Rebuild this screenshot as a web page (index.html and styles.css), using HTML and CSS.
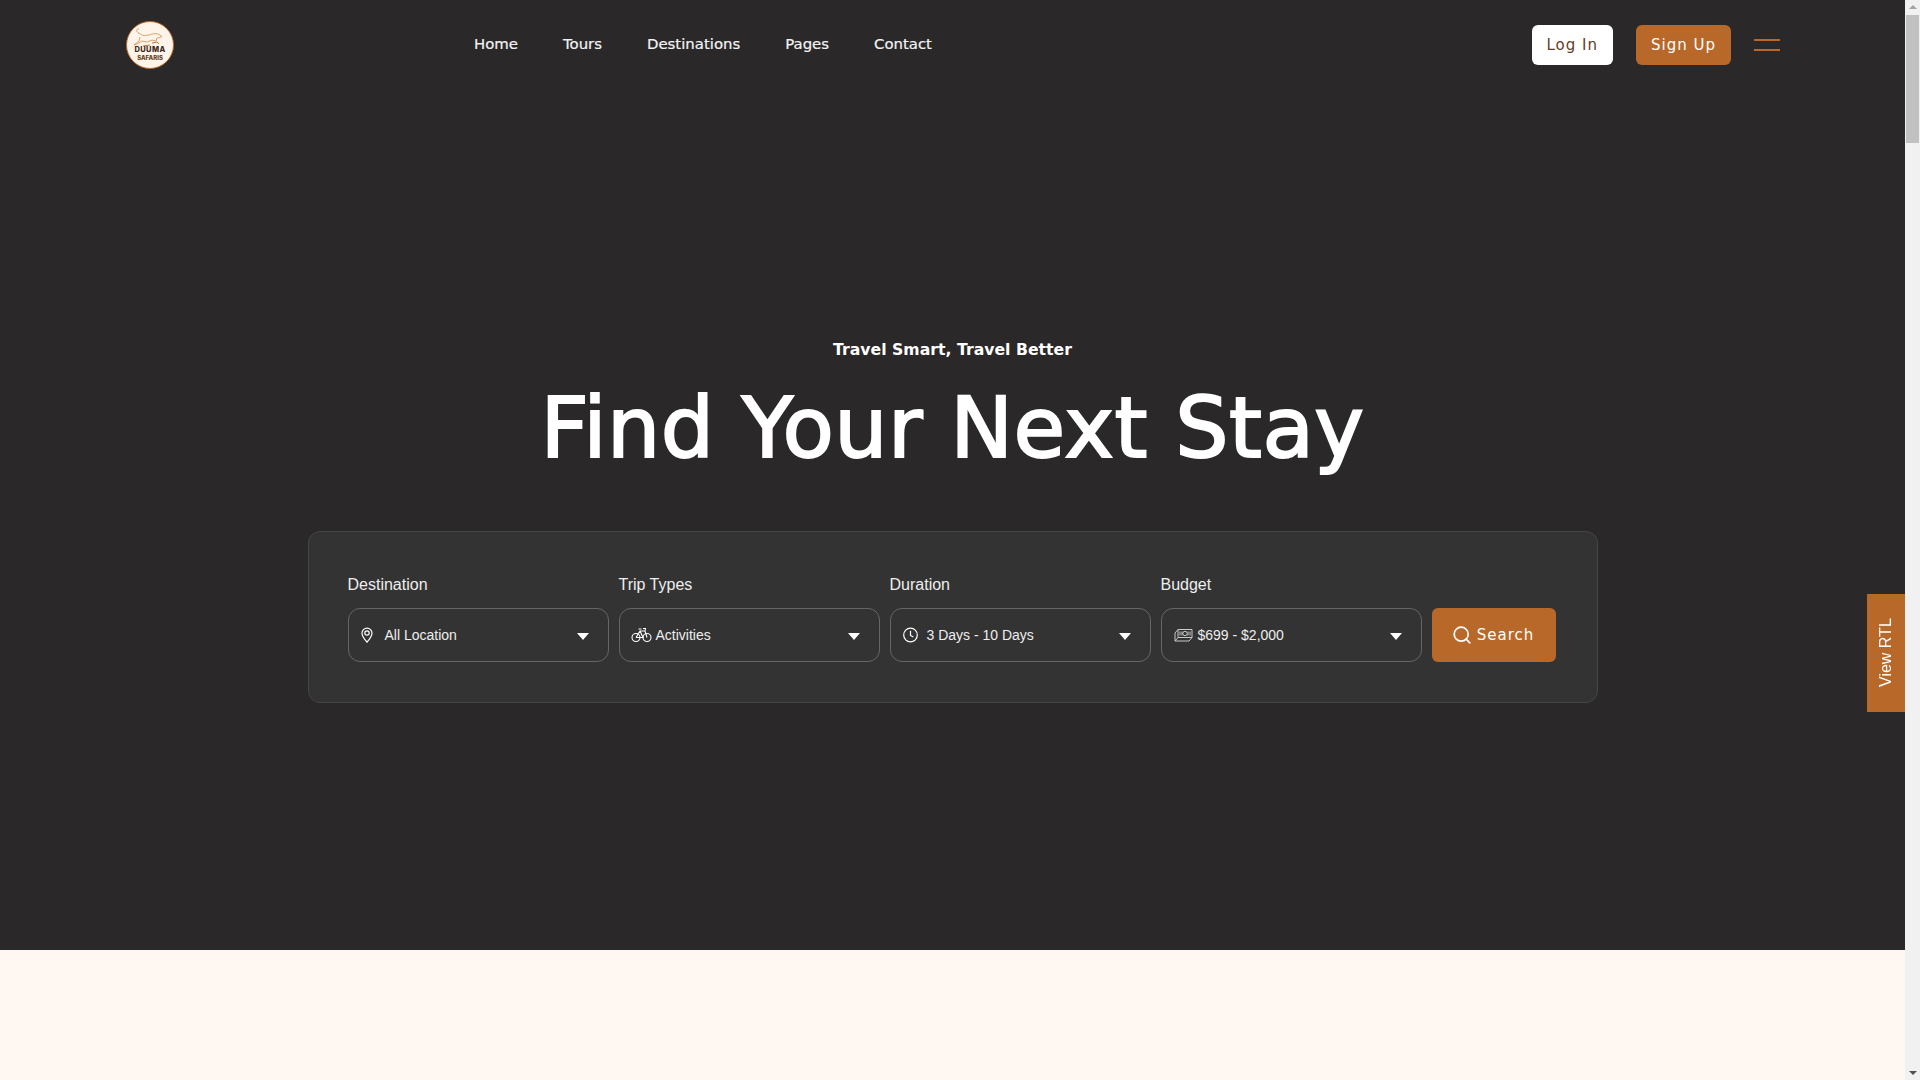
FILE: index.html
```html
<!DOCTYPE html>
<html lang="en">
<head>
  <meta charset="UTF-8">
  <title>Duuma Safaris</title>
  <link rel="stylesheet" href="styles.css">
</head>
<body>
  <section class="hero">
    <header class="site-header">
      <a class="logo" href="#">
        <svg class="logo-mark" viewBox="0 0 48 48" width="48" height="48">
          <circle cx="24" cy="24" r="23.5" fill="#fff4ea" stroke="#b86828"/>
          <path d="M13 8c-2-.5-3 1-2 2.500 1 2 3 1.500 4 3 2 1.500 5 1 8 .5 3-1 6-2 9-1l4 2.500-2 1-3 .5-1 3-4-1-5 2-5-1-5 3-3 1 5-4 1-4" fill="none" stroke="#d9975f" stroke-width=".9"/>
          <path d="M26 22l5-1 2 2M17 25l7-1" fill="none" stroke="#b86828" stroke-width=".9"/>
          <text class="logo-name" x="24" y="31" text-anchor="middle">DUUMA</text>
          <text class="logo-sub" x="24" y="39" text-anchor="middle">SAFARIS</text>
        </svg>
      </a>
      <nav class="main-nav">
        <a href="#">Home</a>
        <a href="#">Tours</a>
        <a href="#">Destinations</a>
        <a href="#">Pages</a>
        <a href="#">Contact</a>
      </nav>
      <div class="header-actions">
        <a class="btn btn-light" href="#">Log In</a>
        <a class="btn btn-brand" href="#">Sign Up</a>
        <button class="menu-toggle" type="button" aria-label="Menu"><span></span><span></span></button>
      </div>
    </header>

    <div class="hero-body">
      <p class="hero-tag">Travel Smart, Travel Better</p>
      <h1 class="hero-title">Find Your Next Stay</h1>

      <form class="search-card">
        <div class="search-field">
          <label>Destination</label>
          <div class="field-box">
            <svg class="field-icon" viewBox="0 0 19 16" width="19" height="16" fill="none" stroke="#fff" stroke-width="1.2">
              <path d="M6 15.200C3.200 11.800 1 9.400 1 6.200a5 5 0 0 1 10 0c0 3.200-2.200 5.600-5 9z"/>
              <circle cx="6" cy="6" r="2.200"/>
            </svg>
            <span>All Location</span>
            <i class="caret"></i>
          </div>
        </div>
        <div class="search-field">
          <label>Trip Types</label>
          <div class="field-box">
            <svg class="field-icon field-icon-wide" viewBox="0 0 21 16" width="21" height="16" fill="none" stroke="#fff" stroke-width="1.1">
              <circle cx="5" cy="10.500" r="4"/>
              <circle cx="16" cy="10.500" r="4"/>
              <path d="M5 10.500l4-6.500h5l2 6.500M9 4l3 6.500H5M12 1.500h2.500l-.5 2.500M7.500 2h3"/>
            </svg>
            <span>Activities</span>
            <i class="caret"></i>
          </div>
        </div>
        <div class="search-field">
          <label>Duration</label>
          <div class="field-box">
            <svg class="field-icon" viewBox="0 0 19 16" width="19" height="16" fill="none" stroke="#fff" stroke-width="1.2">
              <circle cx="7.500" cy="8" r="6.800"/>
              <path d="M7.500 3.800V8.400l2.800 1.600"/>
            </svg>
            <span>3 Days - 10 Days</span>
            <i class="caret"></i>
          </div>
        </div>
        <div class="search-field">
          <label>Budget</label>
          <div class="field-box">
            <svg class="field-icon" viewBox="0 0 19 16" width="19" height="16" fill="none" stroke="#c9c9c9" stroke-width="1">
              <path d="M4 2.500h14v8H4z"/>
              <path d="M4 2.500L1 6v8h14l3-3.500M1 14l3-3.500"/>
              <circle cx="11" cy="6.500" r="2.200"/>
              <path d="M6 4.500v4M16 4.500v4M8 4.500v4M14 4.500v4"/>
            </svg>
            <span>$699 - $2,000</span>
            <i class="caret"></i>
          </div>
        </div>
        <button class="search-btn" type="button">
          <svg viewBox="0 0 18 18" width="18" height="18" fill="none" stroke="#fff" stroke-width="1.7" stroke-linecap="round">
            <circle cx="8.200" cy="8.200" r="7"/>
            <path d="M13.200 13.200l3.600 3.600"/>
          </svg>
          Search
        </button>
      </form>
    </div>
  </section>

  <section class="next-section"></section>

  <a class="rtl-tab" href="#">View RTL</a>

  <div class="scrollbar" aria-hidden="true">
    <i class="scroll-arrow scroll-arrow-up"></i>
    <div class="scroll-thumb"></div>
    <i class="scroll-arrow scroll-arrow-down"></i>
  </div>
</body>
</html>
```

FILE: styles.css
```css
* {
  box-sizing: border-box;
}

body {
  margin: 0;
  padding-right: 15px;
  font-family: "DejaVu Sans", "Liberation Sans", sans-serif;
  background: #fff7f2;
  color: #fff;
}

a {
  color: inherit;
  text-decoration: none;
}

.hero {
  height: 950px;
  background: #2a2829;
}

.site-header {
  display: flex;
  align-items: center;
  height: 90px;
  padding: 0 125px 0 126px;
}

.logo {
  display: flex;
}

.logo-name {
  font-family: Inter, sans-serif;
  font-size: 7.500px;
  font-weight: 800;
  letter-spacing: .4px;
  fill: #3e2a1c;
}

.logo-sub {
  font-family: Inter, sans-serif;
  font-size: 6px;
  font-weight: 800;
  fill: #5f3d26;
}

.main-nav {
  display: flex;
  gap: 45px;
  margin-left: 300px;
  margin-top: -3px;
  font-size: 14.900px;
  color: #f3f3f3;
  -webkit-text-stroke: .2px #f3f3f3;
}

.header-actions {
  display: flex;
  align-items: center;
  margin-left: auto;
}

.btn {
  display: flex;
  align-items: center;
  height: 40px;
  padding: 0 15px;
  border-radius: 6px;
  font-size: 15px;
  letter-spacing: 1px;
}

.btn-light {
  background: #fff;
  color: #5f3d26;
}

.btn-brand {
  margin-left: 23px;
  background: #b86828;
  color: #fff;
}

.menu-toggle {
  display: flex;
  flex-direction: column;
  gap: 8px;
  width: 26px;
  margin-left: 23px;
  padding: 0;
  border: 0;
  background: none;
}

.menu-toggle span {
  display: block;
  height: 2px;
  background: #b86828;
}

.hero-body {
  display: flex;
  flex-direction: column;
  align-items: center;
  padding: 249px 0 0;
}

.hero-tag {
  margin: 0;
  font-size: 15.700px;
  line-height: 22px;
  font-weight: 700;
}

.hero-title {
  margin: 17px 0 0;
  font-size: 84px;
  line-height: 100px;
  font-weight: 400;
  letter-spacing: .5px;
  -webkit-text-stroke: 2px #fff;
}

.search-card {
  display: flex;
  align-items: flex-end;
  gap: 10px;
  width: 1290px;
  height: 172px;
  margin-top: 53px;
  padding: 0 41px 40px 39px;
  background: #333;
  border: 1px solid #454545;
  border-radius: 12px;
}

.search-field {
  width: 261px;
}

.search-field label {
  display: block;
  margin-bottom: 14px;
  font-family: "Liberation Sans", Arial, sans-serif;
  font-size: 16px;
  line-height: 18px;
  color: #eee;
}

.field-box {
  display: flex;
  align-items: center;
  gap: 5px;
  height: 54px;
  padding: 0 19px 0 12px;
  border: 1px solid #666;
  border-radius: 12px;
  font-family: "Liberation Sans", Arial, sans-serif;
  font-size: 14px;
  color: #eee;
}

.field-icon {
  flex: 0 0 19px;
  margin-top: -1px;
}

.field-icon-wide {
  flex-basis: 21px;
  margin-left: -1px;
  margin-right: -1px;
}

.caret {
  width: 0;
  height: 0;
  margin: 3px 0 0 auto;
  border-left: 6px solid transparent;
  border-right: 6px solid transparent;
  border-top: 7px solid #fff;
}

.search-btn {
  display: flex;
  align-items: center;
  justify-content: center;
  gap: 6px;
  width: 124px;
  height: 54px;
  border: 0;
  border-radius: 6px;
  background: #b86828;
  color: #fff;
  font-family: inherit;
  font-size: 15px;
  letter-spacing: 1px;
}

.next-section {
  height: 130px;
  background: #fff7f2;
}

.rtl-tab {
  position: fixed;
  top: 594px;
  right: 15px;
  display: flex;
  align-items: center;
  justify-content: center;
  width: 38px;
  height: 118px;
  background: #b86828;
  color: #fff;
  font-family: "Liberation Sans", Arial, sans-serif;
  font-size: 16px;
  writing-mode: vertical-rl;
  transform: rotate(180deg);
}

/* page scrollbar as it shows in the reference */
.scrollbar {
  position: fixed;
  top: 0;
  right: 0;
  bottom: 0;
  display: flex;
  flex-direction: column;
  align-items: center;
  width: 15px;
  background: #f1f1f1;
}

.scroll-thumb {
  width: 13px;
  height: 128px;
  margin-top: 6px;
  background: #c1c1c1;
}

.scroll-arrow {
  width: 0;
  height: 0;
  border-left: 4px solid transparent;
  border-right: 4px solid transparent;
}

.scroll-arrow-up {
  margin-top: 5px;
  border-bottom: 4px solid #a3a3a3;
}

.scroll-arrow-down {
  margin-top: auto;
  margin-bottom: 5px;
  border-top: 4px solid #505050;
}
```
